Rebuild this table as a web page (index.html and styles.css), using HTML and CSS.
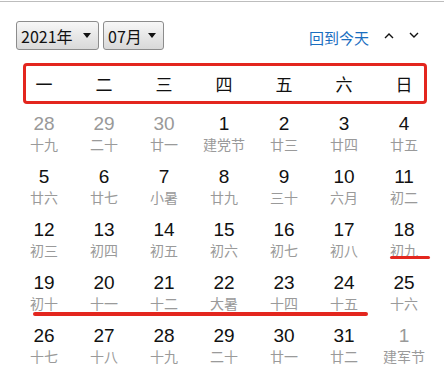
FILE: index.html
```html
<!DOCTYPE html>
<html lang="zh">
<head>
<meta charset="utf-8">
<link rel="stylesheet" href="styles.css">
</head>
<body>
<div class="topline"></div>
<div class="toolbar">
  <div class="select year">2021年<span class="caret"></span></div>
  <div class="select month">07月<span class="caret"></span></div>
  <a class="today">回到今天</a>
  <svg class="chev" width="10" height="8" viewBox="0 0 10 8"><polyline points="1,6 5,2 9,6" fill="none" stroke="#111" stroke-width="1.4"/></svg>
  <svg class="chev down" width="10" height="8" viewBox="0 0 10 8"><polyline points="1,2 5,6 9,2" fill="none" stroke="#111" stroke-width="1.4"/></svg>
</div>
<div class="weekbar">
  <span>一</span><span>二</span><span>三</span><span>四</span><span>五</span><span>六</span><span>日</span>
  <div class="box"></div>
</div>
<div class="days">
  <div class="day other"><b>28</b><i>十九</i></div>
  <div class="day other"><b>29</b><i>二十</i></div>
  <div class="day other"><b>30</b><i>廿一</i></div>
  <div class="day"><b>1</b><i>建党节</i></div>
  <div class="day"><b>2</b><i>廿三</i></div>
  <div class="day"><b>3</b><i>廿四</i></div>
  <div class="day"><b>4</b><i>廿五</i></div>

  <div class="day"><b>5</b><i>廿六</i></div>
  <div class="day"><b>6</b><i>廿七</i></div>
  <div class="day"><b>7</b><i>小暑</i></div>
  <div class="day"><b>8</b><i>廿九</i></div>
  <div class="day"><b>9</b><i>三十</i></div>
  <div class="day"><b>10</b><i>六月</i></div>
  <div class="day"><b>11</b><i>初二</i></div>

  <div class="day"><b>12</b><i>初三</i></div>
  <div class="day"><b>13</b><i>初四</i></div>
  <div class="day"><b>14</b><i>初五</i></div>
  <div class="day"><b>15</b><i>初六</i></div>
  <div class="day"><b>16</b><i>初七</i></div>
  <div class="day"><b>17</b><i>初八</i></div>
  <div class="day"><b>18</b><i>初九</i></div>

  <div class="day"><b>19</b><i>初十</i></div>
  <div class="day"><b>20</b><i>十一</i></div>
  <div class="day"><b>21</b><i>十二</i></div>
  <div class="day"><b>22</b><i>大暑</i></div>
  <div class="day"><b>23</b><i>十四</i></div>
  <div class="day"><b>24</b><i>十五</i></div>
  <div class="day"><b>25</b><i>十六</i></div>

  <div class="day"><b>26</b><i>十七</i></div>
  <div class="day"><b>27</b><i>十八</i></div>
  <div class="day"><b>28</b><i>十九</i></div>
  <div class="day"><b>29</b><i>二十</i></div>
  <div class="day"><b>30</b><i>廿一</i></div>
  <div class="day"><b>31</b><i>廿二</i></div>
  <div class="day other"><b>1</b><i>建军节</i></div>

  <div class="mark mark-18"></div>
  <div class="mark mark-row4"></div>
</div>
</body>
</html>
```
FILE: styles.css
```css
html, body {
  margin: 0;
  background: #fff;
  font-family: "Noto Sans", "Noto Sans CJK SC", sans-serif;
  color: #111;
}
.topline {
  margin-top: 1px;
  height: 1px;
  background: #bdbdbd;
}
.toolbar {
  margin-top: 19px;
  height: 29px;
  display: flex;
  align-items: center;
  padding: 0 25px 0 16px;
}
.select {
  box-sizing: border-box;
  height: 29px;
  border: 1px solid #8c8c8c;
  border-radius: 3px;
  background: linear-gradient(#f7f7f7, #e6e6e6 55%, #d9d9d9);
  display: flex;
  align-items: center;
  font-family: "Noto Sans CJK SC", sans-serif;
  font-size: 16px;
  line-height: 20px;
  color: #111;
  padding-left: 4px;
}
.year { width: 83px; }
.month { width: 61px; margin-left: 4px; }
.caret {
  width: 0;
  height: 0;
  border-left: 4px solid transparent;
  border-right: 4px solid transparent;
  border-top: 5px solid #111;
  margin-left: auto;
  margin-right: 7px;
}
.today {
  margin-left: auto;
  font-family: "Noto Sans CJK SC", sans-serif;
  font-size: 15px;
  line-height: 18px;
  color: #1a6ebf;
  margin-top: 4px;
}
.chev { margin-left: 15px; }
.chev.down { margin-top: -2px; }
.weekbar {
  position: relative;
  margin: 13px 0 0 14px;
  width: 420px;
  height: 41px;
  display: grid;
  grid-template-columns: repeat(7, 60px);
  align-items: center;
  justify-items: center;
  font-family: "Noto Sans CJK SC", sans-serif;
  font-size: 17px;
  line-height: 20px;
}
.box {
  position: absolute;
  left: 9px;
  right: 7px;
  top: 0;
  bottom: 0;
  border: 3px solid #e3261e;
  border-radius: 4px;
}
.days {
  position: relative;
  margin: 9px 0 0 14px;
  width: 420px;
  display: grid;
  grid-template-columns: repeat(7, 60px);
  grid-auto-rows: 53px;
}
.day {
  display: flex;
  flex-direction: column;
  align-items: center;
}
.day b {
  font-family: "Liberation Sans", Arial, sans-serif;
  font-weight: normal;
  font-size: 19px;
  line-height: 21px;
  color: #111;
}
.day i {
  font-style: normal;
  font-family: "Noto Sans CJK SC", sans-serif;
  font-size: 14px;
  line-height: 21px;
  color: #9a9a9a;
}
.day.other b { color: #999; }
.mark {
  position: absolute;
  height: 4px;
  border-radius: 2px;
  background: #e3261e;
}
.mark-18 { left: 376px; width: 40px; top: 143px; height: 3px; }
.mark-row4 { left: 19px; width: 335px; top: 199px; }
```
